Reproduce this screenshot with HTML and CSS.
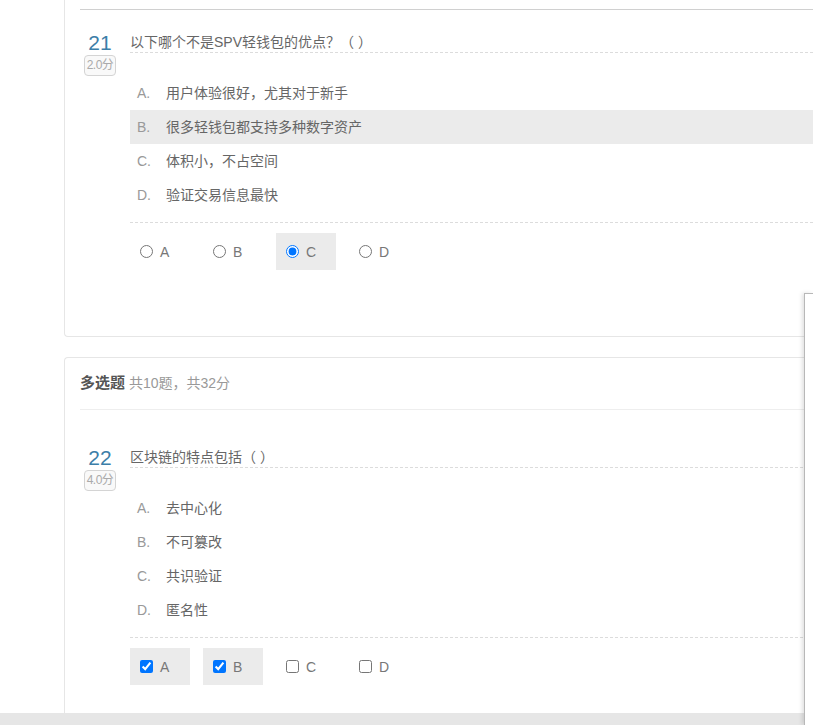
FILE: index.html
```html
<!DOCTYPE html>
<html lang="zh-CN">
<head>
<meta charset="utf-8">
<link rel="stylesheet" href="styles.css">
</head>
<body>
<div class="page">
  <div class="card card-first">
    <div class="top-rule"></div>
    <div class="question q21">
      <div class="qnum">
        <div class="num">21</div>
        <div class="score">2.0分</div>
      </div>
      <div class="qbody">
        <div class="qtitle">以下哪个不是SPV轻钱包的优点？（ ）</div>
        <ul class="options">
          <li class="opt"><span class="letter">A.</span><span>用户体验很好，尤其对于新手</span></li>
          <li class="opt opt-on"><span class="letter">B.</span><span>很多轻钱包都支持多种数字资产</span></li>
          <li class="opt"><span class="letter">C.</span><span>体积小，不占空间</span></li>
          <li class="opt"><span class="letter">D.</span><span>验证交易信息最快</span></li>
        </ul>
        <div class="answers">
          <label class="ans"><input type="radio" name="q21">A</label>
          <label class="ans"><input type="radio" name="q21">B</label>
          <label class="ans ans-on"><input type="radio" name="q21" checked>C</label>
          <label class="ans"><input type="radio" name="q21">D</label>
        </div>
      </div>
    </div>
  </div>

  <div class="card card-second">
    <div class="section-head"><b>多选题</b> <span class="meta">共10题，共32分</span></div>
    <div class="question q22">
      <div class="qnum">
        <div class="num">22</div>
        <div class="score">4.0分</div>
      </div>
      <div class="qbody">
        <div class="qtitle">区块链的特点包括（ ）</div>
        <ul class="options">
          <li class="opt"><span class="letter">A.</span><span>去中心化</span></li>
          <li class="opt"><span class="letter">B.</span><span>不可篡改</span></li>
          <li class="opt"><span class="letter">C.</span><span>共识验证</span></li>
          <li class="opt"><span class="letter">D.</span><span>匿名性</span></li>
        </ul>
        <div class="answers">
          <label class="ans ans-on"><input type="checkbox" checked>A</label>
          <label class="ans ans-on"><input type="checkbox" checked>B</label>
          <label class="ans"><input type="checkbox">C</label>
          <label class="ans"><input type="checkbox">D</label>
        </div>
      </div>
    </div>
  </div>
</div>
<div class="side-panel"></div>
<div class="bottom-bar"></div>
</body>
</html>
```

FILE: styles.css
```css
* { box-sizing: border-box; }
html, body { margin: 0; padding: 0; background: #fff; overflow: hidden; }
body {
  font-family: "Liberation Sans", "Noto Sans CJK SC", sans-serif;
  font-size: 14px;
  color: #666;
  width: 813px;
  height: 725px;
  position: relative;
}
.page {
  padding-left: 64px;
  width: 813px;
  height: 725px;
  overflow: hidden;
}
.card {
  width: 749px;
  border: 1px solid #e6e6e6;
  border-right: none;
  border-radius: 4px 0 0 4px;
  padding: 0 0 0 15px;
  background: #fff;
}
.card-first {
  border-top: none;
  border-top-left-radius: 0;
  padding-top: 9px;
  height: 337px;
}
.top-rule {
  border-top: 1px solid #d0d0d0;
}
.card-second {
  margin-top: 20px;
  height: 368px;
  border-bottom: none;
  border-bottom-left-radius: 0;
}
.section-head {
  padding-top: 14px;
  height: 52px;
  line-height: 22px;
  border-bottom: 1px solid #eee;
  color: #555;
}
.section-head b { font-size: 15px; font-weight: bold; }
.section-head .meta { color: #999; font-size: 14px; }

.question { display: flex; }
.q21 { margin-top: 21px; }
.q22 { margin-top: 36px; }
.qnum {
  width: 40px;
  margin-right: 10px;
  display: flex;
  flex-direction: column;
  align-items: center;
}
.num {
  font-size: 21px;
  line-height: 24px;
  color: #3c7ea8;
  font-family: "Liberation Sans", sans-serif;
}
.score {
  width: 32px;
  height: 21px;
  border: 1px solid #d4d4d4;
  border-radius: 4px;
  font-size: 12px;
  line-height: 19px;
  text-align: center;
  color: #aaa;
  background: #f9f9f9;
  letter-spacing: -0.5px;
}
.qbody { flex: 1; }
.qtitle {
  line-height: 20px;
  padding-top: 1px;
  border-bottom: 1px dashed #dcdcdc;
  color: #666;
}
.options {
  list-style: none;
  margin: 23px 0 0;
  padding: 0 0 10px;
  border-bottom: 1px dashed #dcdcdc;
}
.opt {
  height: 34px;
  line-height: 34px;
  padding-left: 7px;
  display: flex;
}
.opt-on { background: #ebebeb; }
.letter { width: 29px; color: #999; }
.answers {
  display: flex;
  gap: 13px;
  margin-top: 10px;
}
.ans {
  width: 60px;
  height: 37px;
  display: flex;
  align-items: center;
  padding-left: 10px;
  color: #777;
  font-size: 14px;
}
.ans-on { background: #ebebeb; }
.ans input {
  margin: 0 7px 0 0;
  width: 13px;
  height: 13px;
}
.side-panel {
  position: absolute;
  left: 804px;
  top: 293px;
  width: 9px;
  height: 432px;
  background: #fff;
  border-left: 1px solid #b8b8b8;
  border-top: 1px solid #b8b8b8;
  box-shadow: -2px 0 4px rgba(0,0,0,0.12);
  z-index: 3;
}
.bottom-bar {
  position: absolute;
  left: 0;
  bottom: 0;
  width: 100%;
  height: 12px;
  background: #e6e6e6;
  z-index: 2;
}
```
